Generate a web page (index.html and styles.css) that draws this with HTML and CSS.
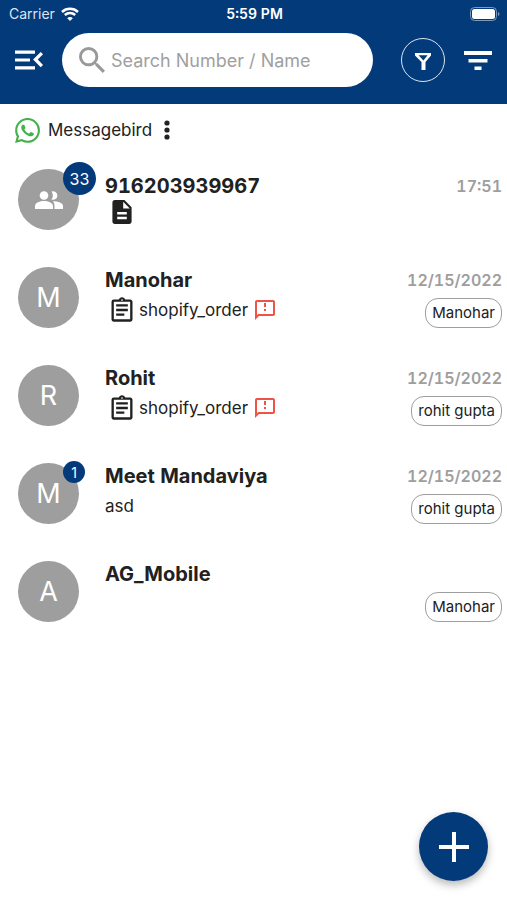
FILE: index.html
```html
<!DOCTYPE html>
<html lang="en">
<head>
<meta charset="utf-8">
<meta name="viewport" content="width=device-width, initial-scale=1">
<title>Messages</title>
<link rel="stylesheet" href="styles.css">
</head>
<body>
<svg class="defs" aria-hidden="true">
  <symbol id="clipboard" viewBox="0 0 24 24"><path d="M7 15h7v2H7zm0-4h10v2H7zm0-4h10v2H7zm12-4h-4.180C14.400 1.840 13.300 1 12 1c-1.300 0-2.400.84-2.820 2H5a2 2 0 0 0-2 2v15c0 1.100.9 2 2 2h14c1.100 0 2-.9 2-2V5c0-1.100-.9-2-2-2zm-7-.25c.41 0 .75.34.75.75s-.34.75-.75.75-.75-.34-.75-.75.34-.75.75-.75zM19 20H5V5h14v15z"/></symbol>
  <symbol id="failed" viewBox="0 0 24 24"><path d="M20 2H4c-1.100 0-2 .9-2 2v18l4-4h14c1.100 0 2-.9 2-2V4c0-1.100-.9-2-2-2zm0 14H5.170L4 17.170V4h16v12zM11 5h2v4h-2zm0 6h2v2h-2z"/></symbol>
</svg>
<header class="top">
  <div class="status">
    <span class="carrier">Carrier
      <svg class="wifi" viewBox="0 0 18 14"><path class="arc" d="M1 5c4.500-4.200 11.500-4.200 16 0M3.800 8c3-2.700 7.400-2.700 10.400 0"/><path d="M6.200 11.300a3.800 3.800 0 0 1 5.600 0L9 14z"/></svg>
    </span>
    <span class="clock">5:59 PM</span>
    <svg class="battery" viewBox="0 0 30 14"><rect class="case" x=".5" y=".5" width="26" height="13" rx="4"/><rect x="2" y="2" width="23" height="10" rx="2.500"/><path class="cap" d="M28 5c2 .7 2 3.300 0 4z"/></svg>
  </div>
  <div class="bar">
    <button class="icon-btn" aria-label="Menu"><svg class="menu" viewBox="0 0 28 20"><path d="M0 .5h20v3.200H0zM0 8.400h15v3.200H0zM0 16.300h20v3.200H0zM25.700 2L28 4.300 22.800 9.600l5.200 5.300-2.300 2.300-7.600-7.600z"/></svg></button>
    <label class="search">
      <svg viewBox="3 3 17.500 17.500"><path d="M15.500 14h-.79l-.28-.27A6.471 6.471 0 0 0 16 9.500 6.500 6.500 0 1 0 9.500 16c1.610 0 3.090-.59 4.230-1.570l.27.28v.79l5 4.990L20.490 19l-4.990-5zm-6 0C7.010 14 5 11.990 5 9.500S7.010 5 9.500 5 14 7.010 14 9.500 11.990 14 9.500 14z"/></svg>
      <input type="text" placeholder="Search Number / Name" aria-label="Search Number / Name">
    </label>
    <button class="filter" aria-label="Filter"><svg viewBox="0 0 16 17"><path fill-rule="evenodd" d="M0 0h16v2.500L10.500 9v8h-4V9L0 2.500zM3.600 2.300L8.400 7.500l4.200-5.200z"/></svg></button>
    <button class="icon-btn" aria-label="Sort"><svg class="sort" viewBox="0 0 28 19"><path d="M0 0h28v4H0zM4.500 8h19v3.500h-19zM10.500 15.500h7V19h-7z"/></svg></button>
  </div>
</header>
<main>
  <div class="channel">
    <svg class="whatsapp" viewBox="0 0 24 24"><path d="M17.472 14.382c-.297-.149-1.758-.867-2.030-.967-.273-.099-.471-.148-.67.150-.197.297-.767.966-.940 1.164-.173.199-.347.223-.644.075-.297-.150-1.255-.463-2.390-1.475-.883-.788-1.480-1.761-1.653-2.059-.173-.297-.018-.458.130-.606.134-.133.298-.347.446-.520.149-.174.198-.298.298-.497.099-.198.050-.371-.025-.520-.075-.149-.669-1.612-.916-2.207-.242-.579-.487-.500-.669-.510-.173-.008-.371-.010-.570-.010-.198 0-.520.074-.792.372-.272.297-1.040 1.016-1.040 2.479 0 1.462 1.065 2.875 1.213 3.074.149.198 2.096 3.200 5.077 4.487.709.306 1.262.489 1.694.625.712.227 1.360.195 1.871.118.571-.085 1.758-.719 2.006-1.413.248-.694.248-1.289.173-1.413-.074-.124-.272-.198-.570-.347m-5.421 7.403h-.004a9.870 9.870 0 0 1-5.031-1.378l-.361-.214-3.741.982.998-3.648-.235-.374a9.860 9.860 0 0 1-1.510-5.260c.001-5.450 4.436-9.884 9.888-9.884 2.640 0 5.122 1.030 6.988 2.898a9.825 9.825 0 0 1 2.893 6.994c-.003 5.450-4.437 9.884-9.885 9.884m8.413-18.297A11.815 11.815 0 0 0 12.050 0C5.495 0 .160 5.335.157 11.892c0 2.096.547 4.142 1.588 5.945L.057 24l6.305-1.654a11.882 11.882 0 0 0 5.683 1.448h.005c6.554 0 11.890-5.335 11.893-11.893a11.821 11.821 0 0 0-3.480-8.413z"/></svg>
    <span>Messagebird</span>
    <button class="more" aria-label="Channel options"><svg viewBox="0 0 6 20"><circle cx="3" cy="3" r="2.600"/><circle cx="3" cy="10" r="2.600"/><circle cx="3" cy="17" r="2.600"/></svg></button>
  </div>
  <ul class="chats">
    <li class="chat group">
      <div class="avatar"><svg class="people" viewBox="0 0 28 18"><circle cx="9" cy="4.500" r="4.300"/><path d="M0 18v-3c0-3.500 5-5 9-5s9 1.500 9 5v3zM16.500.5a4.300 4.300 0 1 1 0 8c1.800-2.300 1.800-5.700 0-8zM19.500 10.300c4 .4 8.500 1.700 8.500 4.700v3h-8.500v-3c0-2-.6-3.600-1.500-4.700z"/></svg><span class="badge large">33</span></div>
      <div class="body"><h2>916203939967</h2><div class="preview"><svg class="file" viewBox="4 2 16 20"><path d="M14 2H6c-1.100 0-1.990.9-1.990 2L4 20c0 1.100.89 2 1.990 2H18c1.100 0 2-.9 2-2V8l-6-6zm2 16H8v-2h8v2zm0-4H8v-2h8v2zm-3-5V3.500L18.500 9H13z"/></svg></div></div>
      <div class="meta"><time>17:51</time></div>
    </li>
    <li class="chat">
      <div class="avatar">M</div>
      <div class="body"><h2>Manohar</h2><div class="preview"><svg class="clip"><use href="#clipboard"/></svg><span>shopify_order</span><svg class="fail"><use href="#failed"/></svg></div></div>
      <div class="meta"><time>12/15/2022</time><span class="tag">Manohar</span></div>
    </li>
    <li class="chat">
      <div class="avatar">R</div>
      <div class="body"><h2>Rohit</h2><div class="preview"><svg class="clip"><use href="#clipboard"/></svg><span>shopify_order</span><svg class="fail"><use href="#failed"/></svg></div></div>
      <div class="meta"><time>12/15/2022</time><span class="tag">rohit gupta</span></div>
    </li>
    <li class="chat">
      <div class="avatar">M<span class="badge">1</span></div>
      <div class="body"><h2>Meet Mandaviya</h2><div class="preview">asd</div></div>
      <div class="meta"><time>12/15/2022</time><span class="tag">rohit gupta</span></div>
    </li>
    <li class="chat">
      <div class="avatar">A</div>
      <div class="body"><h2>AG_Mobile</h2></div>
      <div class="meta"><time></time><span class="tag">Manohar</span></div>
    </li>
  </ul>
</main>
<button class="fab" aria-label="New chat"><svg viewBox="0 0 30 30"><path d="M13 0h4v13h13v4H17v13h-4V17H0v-4h13z"/></svg></button>
</body>
</html>
```

FILE: styles.css
```css
* { box-sizing: border-box; }
body { margin: 0; min-height: 100vh; background: #fff; color: #212121; font-family: Inter, "Liberation Sans", sans-serif; }
button { margin: 0; padding: 0; border: 0; background: none; color: inherit; cursor: pointer; }
svg { display: block; flex: none; fill: currentColor; }
.defs { position: absolute; width: 0; height: 0; }

.top { height: 104px; background: #033a7a; color: #fff; }
.status { display: grid; grid-template-columns: 1fr auto 1fr; align-items: center; height: 27px; padding: 0 7px 0 9px; font-size: 14px; }
.carrier { display: flex; align-items: center; gap: 6px; color: #dce5ef; }
.wifi { width: 18px; height: 14px; color: #fff; }
.wifi .arc { fill: none; stroke: currentColor; stroke-width: 2.5; }
.clock { font-weight: 600; font-variant-numeric: tabular-nums; }
.battery { width: 30px; height: 14px; justify-self: end; }
.battery .case { fill: none; stroke: #7e9aba; }
.battery .cap { fill: #7e9aba; }
.bar { display: flex; align-items: center; height: 66px; padding: 0 15px; }
.menu { width: 28px; height: 20px; }
.sort { width: 28px; height: 19px; }
.search { display: flex; flex: 1; align-items: center; gap: 6px; min-width: 0; height: 54px; margin: 0 28px 0 19px; padding: 0 17px; border-radius: 27px; background: #fff; color: #999; }
.search svg { width: 26px; height: 26px; }
.search input { flex: 1; min-width: 0; padding: 0; border: 0; outline: 0; background: none; font: 18px Inter, sans-serif; color: #333; }
.search input::placeholder { color: #a0a0a0; opacity: 1; }
.filter { display: grid; place-items: center; width: 44px; height: 44px; margin-right: 19px; border: 1px solid #dce5ef; border-radius: 50%; }
.filter svg { width: 16px; height: 17px; margin-top: 2px; }

.channel { display: flex; align-items: center; height: 46px; padding: 6px 15px 0; font-size: 17px; }
.whatsapp { width: 25px; height: 25px; margin-right: 8px; color: #43b049; }
.more { margin-left: 12px; }
.more svg { width: 6px; height: 20px; }

.chats { margin: 0; padding: 0; list-style: none; }
.chat { display: flex; height: 98px; padding: 19px 5px 0 18px; }
.avatar { position: relative; display: grid; place-items: center; flex: none; width: 61px; height: 61px; margin-right: 26px; border-radius: 50%; background: #9e9e9e; color: #fff; font-size: 27px; }
.people { width: 28px; height: 18px; }
.badge { position: absolute; top: -2px; right: -6px; display: grid; place-items: center; width: 22px; height: 22px; border-radius: 50%; background: #033a7a; font-size: 14px; }
.badge.large { top: -7px; right: -17px; width: 33px; height: 33px; font-size: 16px; }
.body { flex: 1; min-width: 0; padding-top: 1px; }
h2 { margin: 0; font-size: 20px; line-height: 24px; font-weight: 700; font-variant-numeric: tabular-nums; }
.preview { display: flex; align-items: center; height: 24px; margin-top: 6px; font-size: 17px; }
.file { width: 20px; height: 24px; margin-left: 7px; }
.clip { width: 28px; height: 28px; margin: 0 3px; }
.fail { width: 24px; height: 24px; margin-left: 5px; color: #ef5346; }
.meta { display: flex; flex-direction: column; align-items: flex-end; gap: 8px; padding-top: 3px; }
time { height: 20px; font-size: 16px; line-height: 20px; font-weight: 600; font-variant-numeric: tabular-nums; color: #9e9e9e; }
.tag { height: 30px; padding: 0 6px; border: 1px solid #9e9e9e; border-radius: 13px; font-size: 15px; line-height: 28px; white-space: nowrap; }
.group h2 { padding-top: 4px; }
.group .preview { margin-top: 2px; }
.group .meta { padding-top: 7px; }

.fab { position: fixed; right: 19px; bottom: 19px; display: grid; place-items: center; width: 69px; height: 69px; border-radius: 50%; background: #033a7a; color: #fff; box-shadow: 0 4px 8px rgba(0, 0, 0, .28); }
.fab svg { width: 30px; height: 30px; }
```
